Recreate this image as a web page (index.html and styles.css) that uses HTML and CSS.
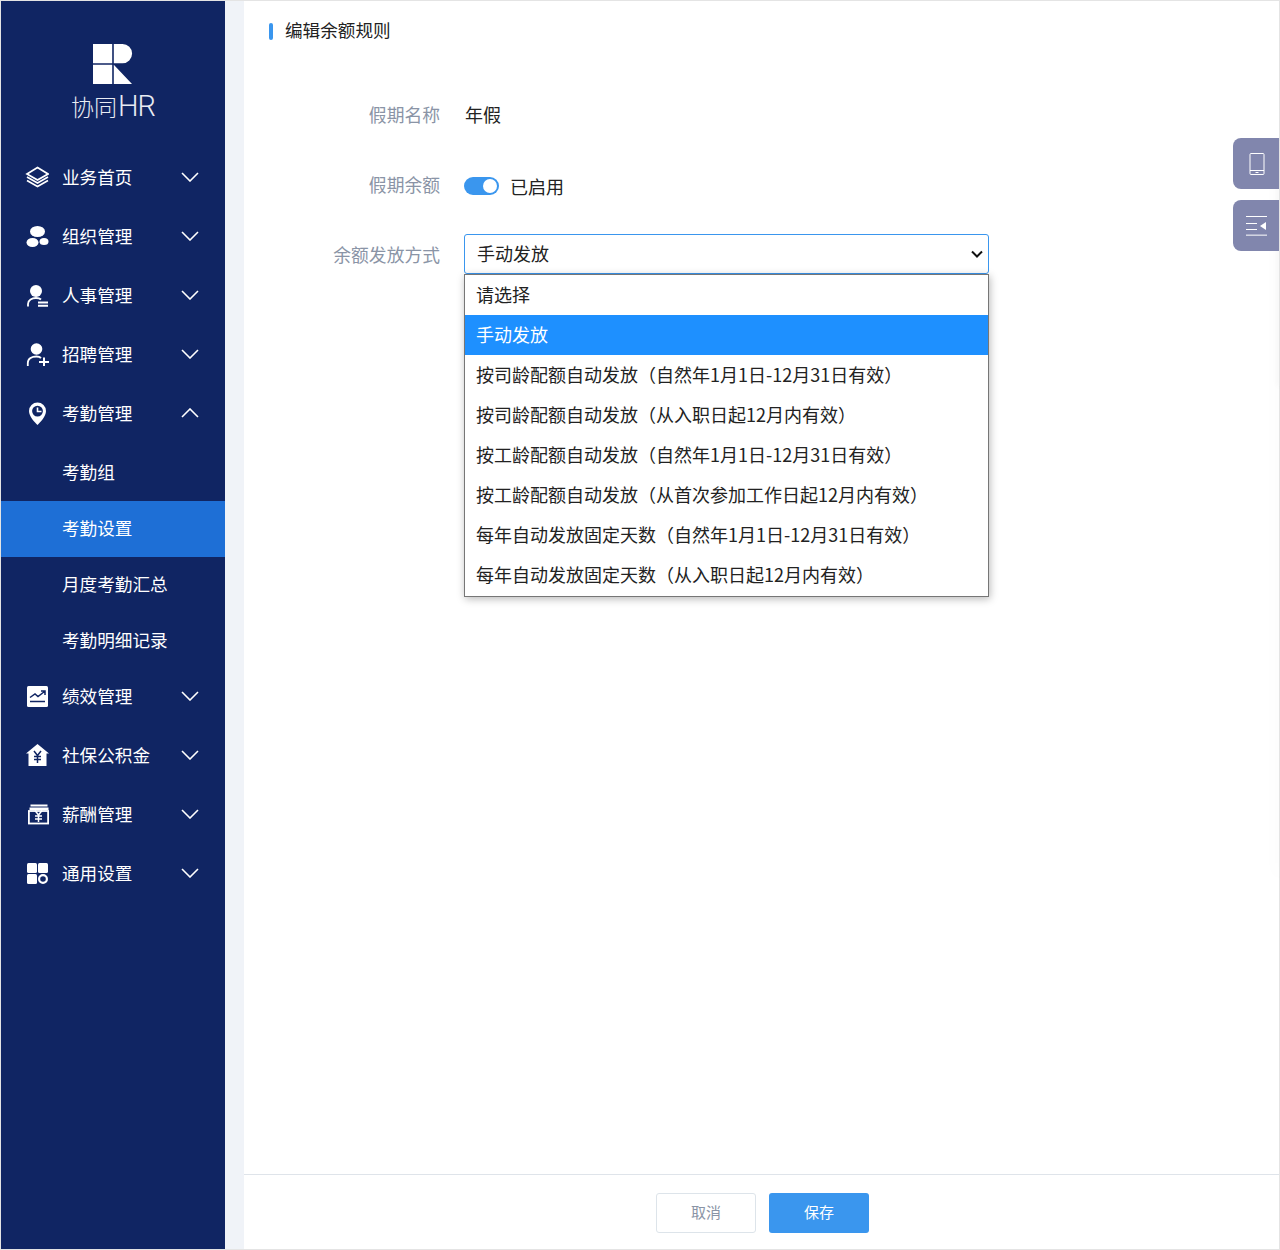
FILE: index.html
```html
<!DOCTYPE html>
<html lang="zh-CN">
<head>
<meta charset="utf-8">
<title>编辑余额规则</title>
<link rel="stylesheet" href="styles.css">
</head>
<body>
<div class="app">
  <aside class="sidebar">
    <div class="brand">
      <svg class="logo" width="40" height="40" viewBox="0 0 40 40"><path fill="#fff" d="M0 0H19.200V19.200H0ZM20.800 0H29.500A9.600 9.600 0 0 1 29.500 19.200H20.800ZM0 20.800H19.200V40H0ZM20.800 20.800 39 40H20.800Z"/></svg>
      <div class="brand-name">协同<span class="brand-hr">HR</span></div>
    </div>
    <nav class="nav">
      <a class="nav-item"><svg class="nav-icon" viewBox="0 0 24 24"><path fill="none" stroke="#fff" stroke-width="1.700" d="M12.500 2.500 23 9 12.500 15 2 9Z"/><path fill="none" stroke="#fff" stroke-width="1.700" d="M2 12 12.500 18 23 12M2 15.500 12.500 21.500 23 15.500"/></svg><span>业务首页</span><svg class="chev" viewBox="0 0 18 10"><path d="M1 1 9 9 17 1"/></svg></a>
      <a class="nav-item"><svg class="nav-icon" viewBox="0 0 24 24"><ellipse fill="#fff" cx="12.500" cy="7.500" rx="7.500" ry="5.500"/><ellipse fill="#fff" cx="7.500" cy="18.500" rx="6" ry="4.500"/><ellipse fill="#fff" cx="19" cy="17.500" rx="4.500" ry="3.500"/></svg><span>组织管理</span><svg class="chev" viewBox="0 0 18 10"><path d="M1 1 9 9 17 1"/></svg></a>
      <a class="nav-item"><svg class="nav-icon" viewBox="0 0 24 24"><circle fill="#fff" cx="11" cy="8" r="6"/><path fill="none" stroke="#fff" stroke-width="1.800" d="M3 23.500V21C3 17 7 15 11 15 13 15 15 15.500 16 16.500"/><path stroke="#fff" stroke-width="2" d="M13 19.500H23M13 22.800H23"/></svg><span>人事管理</span><svg class="chev" viewBox="0 0 18 10"><path d="M1 1 9 9 17 1"/></svg></a>
      <a class="nav-item"><svg class="nav-icon" viewBox="0 0 24 24"><circle fill="#fff" cx="11.500" cy="7" r="5.800"/><path fill="none" stroke="#fff" stroke-width="1.800" d="M2.800 24V21C2.800 16.500 7 14.500 11.500 14.500 13.500 14.500 15 15 16 16"/><path stroke="#fff" stroke-width="2" d="M14 20H24M19 15.500V24"/></svg><span>招聘管理</span><svg class="chev" viewBox="0 0 18 10"><path d="M1 1 9 9 17 1"/></svg></a>
      <a class="nav-item"><svg class="nav-icon" viewBox="0 0 24 24"><path fill="#fff" fill-rule="evenodd" d="M12.500 1.500A8.500 8.500 0 0 0 4 10C4 15.500 9.500 21 12.500 24 15.500 21 21 15.500 21 10A8.500 8.500 0 0 0 12.500 1.500ZM12.500 4.700A5.400 5.400 0 1 1 12.500 15.500 5.400 5.400 0 0 1 12.500 4.700Z"/><path fill="none" stroke="#fff" stroke-width="1.600" d="M12.500 6.500V10.500H16.500"/></svg><span>考勤管理</span><svg class="chev" viewBox="0 0 18 10"><path d="M1 9 9 1 17 9"/></svg></a>
      <div class="sub">
        <a class="sub-item">考勤组</a>
        <a class="sub-item active">考勤设置</a>
        <a class="sub-item">月度考勤汇总</a>
        <a class="sub-item">考勤明细记录</a>
      </div>
      <a class="nav-item"><svg class="nav-icon" viewBox="0 0 24 24"><rect fill="#fff" x="2" y="2" width="21" height="21" rx="1.500"/><path fill="none" stroke="#102563" stroke-width="1.500" d="M5 13.500 10 10 13 12.500 19.500 7.500M16 7H20V11M5 17.500H20"/></svg><span>绩效管理</span><svg class="chev" viewBox="0 0 18 10"><path d="M1 1 9 9 17 1"/></svg></a>
      <a class="nav-item"><svg class="nav-icon" viewBox="0 0 24 24"><path fill="#fff" d="M12.500 1 24 10.500H21.500V23H3.500V10.500H1Z"/><path fill="none" stroke="#102563" stroke-width="1.500" d="M9 8 12.500 12.500 16 8M12.500 12.500V20M9 13.500H16M9 16.500H16"/></svg><span>社保公积金</span><svg class="chev" viewBox="0 0 18 10"><path d="M1 1 9 9 17 1"/></svg></a>
      <a class="nav-item"><svg class="nav-icon" viewBox="0 0 24 24"><path fill="#fff" d="M5.500 2.500H22.500V4.500H5.500ZM4.500 5.500H23.500V8H4.500Z"/><rect fill="none" stroke="#fff" stroke-width="1.800" x="3.900" y="9" width="19.200" height="12.500"/><path fill="none" stroke="#fff" stroke-width="1.500" d="M10 8.500 13.500 13 17 8.500M13.500 13V20M10 14H17M10 17H17"/></svg><span>薪酬管理</span><svg class="chev" viewBox="0 0 18 10"><path d="M1 1 9 9 17 1"/></svg></a>
      <a class="nav-item"><svg class="nav-icon" viewBox="0 0 24 24"><rect fill="#fff" x="2" y="2" width="10" height="10" rx="1.500"/><rect fill="#fff" x="13" y="2" width="10" height="10" rx="1.500"/><rect fill="#fff" x="2" y="13" width="10" height="10" rx="1.500"/><circle fill="none" stroke="#fff" stroke-width="2.200" cx="18" cy="18" r="3.900"/></svg><span>通用设置</span><svg class="chev" viewBox="0 0 18 10"><path d="M1 1 9 9 17 1"/></svg></a>
    </nav>
  </aside>
  <main class="main">
    <div class="content">
      <h1 class="title">编辑余额规则</h1>
      <div class="form">
        <div class="row row-name"><div class="label">假期名称</div><div class="value">年假</div></div>
        <div class="row row-balance"><div class="label">假期余额</div><div class="value value-switch"><span class="switch"><span class="knob"></span></span><span>已启用</span></div></div>
        <div class="row row-method">
          <div class="label">余额发放方式</div>
          <div class="select-wrap">
            <div class="select"><span class="select-text">手动发放</span><svg class="select-arrow" viewBox="0 0 12 8"><path d="M1 1.500 6 6.500 11 1.500"/></svg></div>
            <ul class="options">
              <li>请选择</li>
              <li class="selected">手动发放</li>
              <li>按司龄配额自动发放（自然年1月1日-12月31日有效）</li>
              <li>按司龄配额自动发放（从入职日起12月内有效）</li>
              <li>按工龄配额自动发放（自然年1月1日-12月31日有效）</li>
              <li>按工龄配额自动发放（从首次参加工作日起12月内有效）</li>
              <li>每年自动发放固定天数（自然年1月1日-12月31日有效）</li>
              <li>每年自动发放固定天数（从入职日起12月内有效）</li>
            </ul>
          </div>
        </div>
      </div>
    </div>
    <footer class="footer">
      <button class="btn btn-cancel">取消</button>
      <button class="btn btn-save">保存</button>
    </footer>
    <div class="edge-shadow edge-wide"></div>
    <div class="edge-shadow edge-narrow"></div>
    <div class="float-tools">
      <div class="tool"><svg width="16" height="22" viewBox="0 0 16 22"><rect fill="none" stroke="#fff" x="1" y="0.500" width="14" height="21" rx="1"/><path stroke="#fff" d="M1 17.500H15"/><path stroke="#fff" d="M6.500 19.500H9.500"/></svg></div>
      <div class="tool"><svg width="21" height="20" viewBox="0 0 21 20"><path stroke="#fff" d="M0 .5H21M0 7.500H11M0 13.500H11"/><path stroke="#d5d7e4" stroke-width="1.500" d="M0 19.200H21"/><path fill="#fff" d="M14 10 20 6V14Z"/></svg></div>
    </div>
  </main>
</div>
</body>
</html>
```
FILE: styles.css
```css
* { box-sizing: border-box; }
html, body { margin: 0; padding: 0; }
body {
  width: 1280px;
  height: 1250px;
  overflow: hidden;
  font-family: "Noto Sans CJK SC", "Noto Sans", sans-serif;
  font-size: 18px;
  color: #222;
  background: #fff;
}
.app {
  display: flex;
  width: 1280px;
  height: 1250px;
  border: 1px solid #e4e4e4;
  background: #f0f3f8;
}
.sidebar {
  flex: 0 0 224px;
  background: #102563;
  color: #fff;
  font-size: 17.6px;
}
.brand {
  height: 146px;
  padding-top: 43px;
  display: flex;
  flex-direction: column;
  align-items: center;
}
.logo { display: block; }
.brand-name {
  margin-top: 2px;
  font-size: 23px;
  line-height: 40px;
  font-weight: 300;
  color: #e8ebf3;
  white-space: nowrap;
}
.brand-hr {
  font-family: Roboto, sans-serif;
  font-size: 29px;
  font-weight: 300;
  letter-spacing: -1px;
  margin-left: 1px;
}
.nav-item {
  display: flex;
  align-items: center;
  height: 59px;
  padding-left: 24px;
  padding-right: 26px;
}
.nav-icon { width: 24px; height: 24px; flex: none; }
.nav-item span { margin-left: 13px; flex: 1; }
.chev { width: 18px; height: 10px; flex: none; }
.chev path { fill: none; stroke: #fff; stroke-width: 1.600; }
.sub { margin: 3px 0 -3px; }
.sub-item {
  display: block;
  height: 56px;
  line-height: 54px;
  padding-left: 61px;
}
.sub-item.active { background: #1e6fd6; }
.main {
  position: relative;
  flex: 1;
  margin-left: 19px;
  background: #fff;
  display: flex;
  flex-direction: column;
}
.content { flex: 1; padding: 0 24px; }
.title {
  margin: 0;
  height: 60px;
  line-height: 58px;
  font-size: 17.6px;
  font-weight: 400;
  padding-left: 17px;
  position: relative;
}
.title::before {
  content: "";
  position: absolute;
  left: 1px;
  top: 22px;
  width: 4px;
  height: 17px;
  border-radius: 2px;
  background: #3a96ee;
}
.form { padding-top: 33px; }
.row { display: flex; align-items: flex-start; }
.label {
  width: 172px;
  text-align: right;
  color: #8a94a6;
  font-size: 17.8px;
  line-height: 40px;
}
.value { margin-left: 25px; line-height: 40px; }
.row-name { height: 71px; }
.row-balance { height: 69px; }
.row-balance .label { line-height: 38px; }
.value-switch { display: flex; align-items: center; margin-left: 24px; height: 42px; }
.value-switch > span:last-child { margin-left: -1px; }
.switch {
  position: relative;
  width: 35px;
  height: 18px;
  border-radius: 9px;
  background: #3a96ee;
  margin-right: 12px;
}
.knob {
  position: absolute;
  right: 2px;
  top: 2px;
  width: 14px;
  height: 14px;
  border-radius: 50%;
  background: #fff;
}
.row-method .label { padding-top: 0; }
.select-wrap { position: relative; margin-left: 24px; width: 525px; }
.select {
  display: flex;
  align-items: center;
  justify-content: space-between;
  height: 40px;
  padding: 0 5px 0 12px;
  border: 1px solid #3a96ee;
  border-radius: 3px;
  background: #fff;
  color: #222;
}
.select-text { padding-bottom: 2px; }
.select-arrow { width: 12px; height: 8px; }
.select-arrow path { fill: none; stroke: #111; stroke-width: 2; }
.options {
  position: absolute;
  left: 0;
  top: 40px;
  width: 525px;
  margin: 0;
  padding: 0 0 1px;
  list-style: none;
  background: #fff;
  border: 1px solid #767676;
  box-shadow: 1px 2px 8px rgba(0, 0, 0, 0.28);
}
.options li {
  height: 40px;
  line-height: 38px;
  padding-left: 11px;
  white-space: nowrap;
}
.options li.selected { background: #1e90ff; color: #fff; }
.footer {
  flex: none;
  height: 75px;
  padding: 2px 0 0 2px;
  border-top: 1px solid #dfe4ea;
  display: flex;
  justify-content: center;
  align-items: center;
  gap: 13px;
}
.btn {
  width: 100px;
  height: 40px;
  border-radius: 3px;
  font: inherit;
  font-size: 15px;
  padding: 0 0 4px;
}
.btn-cancel { background: #fff; border: 1px solid #dde4ea; color: #8a94a6; }
.btn-save { background: #3a96ee; border: 0; color: #fff; }
.edge-shadow {
  position: absolute;
  right: -1px;
  width: 1px;
  top: 140px;
}
.edge-wide { height: 735px; box-shadow: 0 0 16px rgba(0, 0, 0, 0.16); }
.edge-narrow { height: 245px; box-shadow: 0 0 6px rgba(0, 0, 0, 0.16); }
.float-tools {
  position: absolute;
  right: 0;
  top: 137px;
  display: flex;
  flex-direction: column;
  gap: 11px;
}
.tool {
  width: 46px;
  height: 51px;
  padding-left: 1px;
  background: #8186ad;
  border-radius: 8px 0 0 8px;
  display: flex;
  align-items: center;
  justify-content: center;
}
```
